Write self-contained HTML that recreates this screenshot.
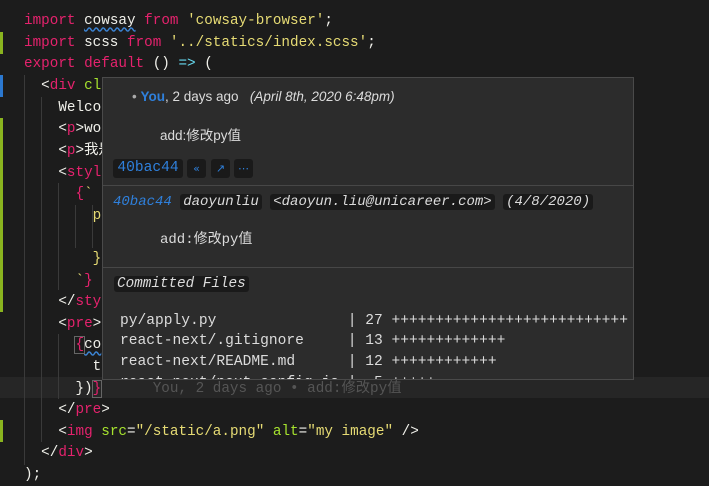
<!DOCTYPE html>
<html><head><meta charset="utf-8"><style>
body{margin:0;width:709px;height:480px;background:#1c1c1c;overflow:hidden;position:relative;font-family:"Liberation Mono","Noto Sans CJK SC",monospace;}
.ln{position:absolute;left:24px;height:21.6px;line-height:21.6px;font-size:14.3px;color:#f0f0ea;white-space:pre;margin-top:1.5px}
.k{color:#e5226d}.s{color:#e6db74}.g{color:#a6e22e}.o{color:#66d9ef}.y{color:#e6db74}
.sq{text-decoration:underline wavy #3c86d8;text-underline-offset:3px}
.gd{position:absolute;width:1px;background:#3a3a3a}
.bar{position:absolute;left:0;width:3px}
#pop{position:absolute;left:102px;top:77px;width:530px;height:301px;background:#2c2c2c;border:1px solid #4a4a4a;overflow:hidden;color:#dcdcdc}
.sans{font-family:"Liberation Sans","Noto Sans CJK SC",sans-serif}
.bd{background:#1a1a1a;border-radius:3px;padding:0 3px}
.bt{position:absolute;top:81px;height:19px;width:19px;background:#1a1a1a;border-radius:3px;color:#2f80dc;font-size:11px;text-align:center;line-height:19px;font-family:"DejaVu Sans",sans-serif}
.sep{position:absolute;left:0;right:0;height:1px;background:#474747}
.f{position:absolute;left:17px;font-size:14.6px;white-space:pre;color:#dcdcdc}
</style></head><body>
<div class="bar" style="top:32px;height:22px;background:#8ab41f"></div>
<div class="bar" style="top:75px;height:22px;background:#2b78d0"></div>
<div class="bar" style="top:118px;height:194px;background:#8ab41f"></div>
<div class="bar" style="top:420px;height:22px;background:#8ab41f"></div>
<div style="position:absolute;left:0;top:377px;width:709px;height:21px;background:#262626"></div>
<div class="gd" style="left:24px;top:75px;height:390px"></div>
<div class="gd" style="left:41px;top:97px;height:345px"></div>
<div class="gd" style="left:58px;top:183px;height:107px"></div>
<div class="gd" style="left:58px;top:334px;height:65px"></div>
<div class="gd" style="left:75px;top:205px;height:43px"></div>
<div class="gd" style="left:92px;top:205px;height:43px"></div>
<div class="ln" style="top:9px"><span class="k">import</span> <span class="sq">cowsay</span> <span class="k">from</span> <span class="s">'cowsay-browser'</span>;</div>
<div class="ln" style="top:31px"><span class="k">import</span> scss <span class="k">from</span> <span class="s">'../statics/index.scss'</span>;</div>
<div class="ln" style="top:52px"><span class="k">export</span> <span class="k">default</span> () <span class="o">=&gt;</span> (</div>
<div class="ln" style="top:74px">  &lt;<span class="k">div</span> <span class="g">cl</span></div>
<div class="ln" style="top:96px">    Welco</div>
<div class="ln" style="top:117px">    &lt;<span class="k">p</span>&gt;wo</div>
<div class="ln" style="top:139px">    &lt;<span class="k">p</span>&gt;我是</div>
<div class="ln" style="top:161px">    &lt;<span class="k">styl</span></div>
<div class="ln" style="top:182px">      <span class="k">{</span><span class="s">`</span></div>
<div class="ln" style="top:204px">        <span class="s">p</span></div>
<div class="ln" style="top:247px">        <span class="y">}</span></div>
<div class="ln" style="top:269px">      <span class="s">`</span><span class="k">}</span></div>
<div class="ln" style="top:290px">    &lt;/<span class="k">sty</span></div>
<div class="ln" style="top:312px">    &lt;<span class="k">pre</span>&gt;</div>
<div class="ln" style="top:333px">      <span class="k" style="outline:1px solid #666">{</span><span class="sq">co</span></div>
<div class="ln" style="top:355px">        t</div>
<div class="ln" style="top:377px">      })<span class="k" style="outline:1px solid #666">}</span>      <span style="color:#555">You, 2 days ago • add:修改py值</span></div>
<div class="ln" style="top:398px">    &lt;/<span class="k">pre</span>&gt;</div>
<div class="ln" style="top:420px">    &lt;<span class="k">img</span> <span class="g">src</span>=<span class="s">"/static/a.png"</span> <span class="g">alt</span>=<span class="s">"my image"</span> /&gt;</div>
<div class="ln" style="top:441px">  &lt;/<span class="k">div</span>&gt;</div>
<div class="ln" style="top:463px">);</div>
<div id="pop">
 <div class="sans" style="position:absolute;left:29px;top:11px;font-size:13.5px;white-space:pre"><span style="color:#aaa">•</span> <b style="color:#2f80dc">You</b>, 2 days ago   <i>(April 8th, 2020 6:48pm)</i></div>
 <div class="sans" style="position:absolute;left:57px;top:46px;font-size:13.5px">add:修改py值</div>
 <div style="position:absolute;left:10px;top:81px;height:19px;width:70px;text-align:center;background:#1a1a1a;border-radius:3px;font-size:14.6px;line-height:19px;color:#2f80dc">40bac44</div>
 <div class="bt" style="left:84px">«</div>
 <div class="bt" style="left:108px">↗</div>
 <div class="bt" style="left:131px">⋯</div>
 <div class="sep" style="top:107px"></div>
 <div style="position:absolute;left:10px;top:115px;font-size:14px;font-style:italic;white-space:pre;line-height:18px"><span style="color:#2f80dc">40bac44</span> <span class="bd">daoyunliu</span> <span class="bd">&lt;daoyun.liu@unicareer.com&gt;</span> <span class="bd">(4/8/2020)</span></div>
 <div style="position:absolute;left:57px;top:150px;font-size:14px">add:修改py值</div>
 <div class="sep" style="top:189px"></div>
 <div style="position:absolute;left:11px;top:197px;font-size:14.3px;font-style:italic;line-height:18px"><span class="bd">Committed Files</span></div>
 <div class="f" style="top:235px">py/apply.py               | 27 +++++++++++++++++++++++++++</div>
 <div class="f" style="top:255px">react-next/.gitignore     | 13 +++++++++++++</div>
 <div class="f" style="top:276px">react-next/README.md      | 12 ++++++++++++</div>
 <div class="f" style="top:297px">react-next/next.config.js |  5 +++++</div>
</div>
</body></html>
